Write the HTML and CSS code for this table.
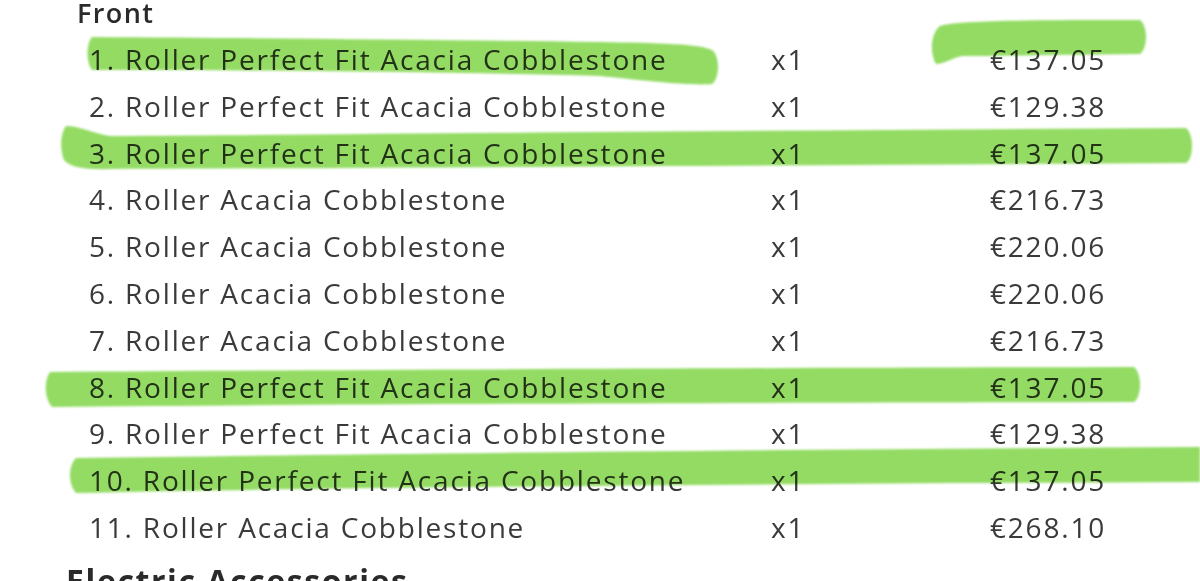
FILE: index.html
```html
<!DOCTYPE html>
<html lang="en">
<head>
<meta charset="utf-8">
<title>Order summary</title>
<link rel="stylesheet" href="styles.css">
</head>
<body>
<main class="order">
  <section class="group">
    <h2 class="group-title">Front</h2>
    <ol class="items">
      <li class="item"><span class="name">1. Roller Perfect Fit Acacia Cobblestone</span><span class="qty">x1</span><span class="price">€137.05</span></li>
      <li class="item"><span class="name">2. Roller Perfect Fit Acacia Cobblestone</span><span class="qty">x1</span><span class="price">€129.38</span></li>
      <li class="item"><span class="name">3. Roller Perfect Fit Acacia Cobblestone</span><span class="qty">x1</span><span class="price">€137.05</span></li>
      <li class="item"><span class="name">4. Roller Acacia Cobblestone</span><span class="qty">x1</span><span class="price">€216.73</span></li>
      <li class="item"><span class="name">5. Roller Acacia Cobblestone</span><span class="qty">x1</span><span class="price">€220.06</span></li>
      <li class="item"><span class="name">6. Roller Acacia Cobblestone</span><span class="qty">x1</span><span class="price">€220.06</span></li>
      <li class="item"><span class="name">7. Roller Acacia Cobblestone</span><span class="qty">x1</span><span class="price">€216.73</span></li>
      <li class="item"><span class="name">8. Roller Perfect Fit Acacia Cobblestone</span><span class="qty">x1</span><span class="price">€137.05</span></li>
      <li class="item"><span class="name">9. Roller Perfect Fit Acacia Cobblestone</span><span class="qty">x1</span><span class="price">€129.38</span></li>
      <li class="item"><span class="name">10. Roller Perfect Fit Acacia Cobblestone</span><span class="qty">x1</span><span class="price">€137.05</span></li>
      <li class="item"><span class="name">11. Roller Acacia Cobblestone</span><span class="qty">x1</span><span class="price">€268.10</span></li>
    </ol>
  </section>
  <h2 class="group-title next">Electric Accessories</h2>
</main>

<svg class="marker" width="1200" height="581" viewBox="0 0 1200 581" aria-hidden="true">
  <defs>
    <filter id="soft" x="-5%" y="-20%" width="110%" height="140%">
      <feGaussianBlur stdDeviation="1.2"/>
    </filter>
  </defs>
  <g fill="#93db63" filter="url(#soft)">
    <path d="M92 37 C250 38 450 40 600 42 C660 43 700 44 712 50 C720 56 720 78 712 84 C690 86 640 80 600 76 C450 72 250 70 92 70 C86 62 86 44 92 37 Z"/>
    <path d="M940 26 C960 20 1050 20 1140 20 C1148 26 1148 48 1140 54 C1050 55 990 56 962 56 C952 58 944 64 936 64 C930 54 930 34 940 26 Z"/>
    <path d="M66 126 C80 126 95 134 110 136 C400 134 800 130 1186 128 C1194 134 1194 158 1186 163 C800 165 400 168 110 169 C90 170 70 168 64 160 C60 150 60 134 66 126 Z"/>
    <path d="M50 372 C300 370 700 368 1134 367 C1142 374 1142 396 1134 402 C700 403 300 404 52 407 C44 398 44 380 50 372 Z"/>
    <path d="M76 458 C300 455 700 450 1200 447 L1200 482 C700 484 300 488 76 493 C68 484 68 466 76 458 Z"/>
  </g>
</svg>
</body>
</html>
```

FILE: styles.css
```css
* {
  box-sizing: border-box;
}

html, body {
  margin: 0;
  padding: 0;
  background: #ffffff;
}

body {
  font-family: "Open Sans", "Noto Sans", "DejaVu Sans", sans-serif;
  color: #3a3a3a;
  width: 1200px;
  height: 581px;
  overflow: hidden;
  position: relative;
}

.order {
  padding: 0 94px 0 77px;
}

.group-title {
  margin: 0;
  font-size: 27px;
  line-height: 26px;
  font-weight: 600;
  letter-spacing: 1.4px;
  color: #2a2a2a;
}

.group-title.next {
  margin: 8px 0 0 -11px;
  font-size: 32px;
  line-height: normal;
  font-weight: 700;
  letter-spacing: 1.6px;
}

.items {
  list-style: none;
  margin: 10px 0 0 0;
  padding: 0 0 0 12px;
}

.item {
  display: grid;
  grid-template-columns: 682px 1fr auto;
  font-size: 28px;
  line-height: 46.8px;
  letter-spacing: 1.8px;
}

.price {
  text-align: right;
}

.marker {
  position: absolute;
  top: 0;
  left: 0;
  mix-blend-mode: multiply;
  pointer-events: none;
}
```
